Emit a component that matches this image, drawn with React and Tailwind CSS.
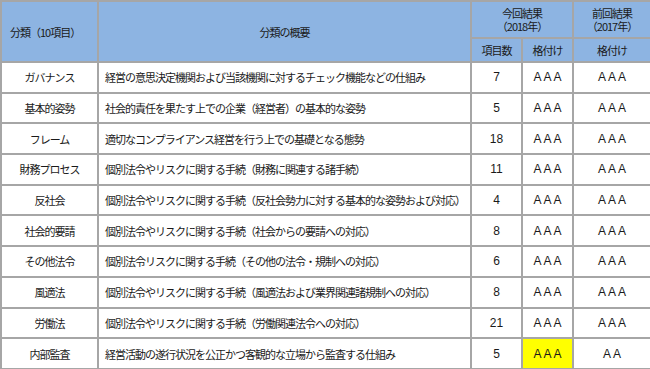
import React from "react";

const rows = [
  ["ガバナンス", "経営の意思決定機関および当該機関に対するチェック機能などの仕組み", "7", "A A A", "A A A"],
  ["基本的姿勢", "社会的責任を果たす上での企業（経営者）の基本的な姿勢", "5", "A A A", "A A A"],
  ["フレーム", "適切なコンプライアンス経営を行う上での基礎となる態勢", "18", "A A A", "A A A"],
  ["財務プロセス", "個別法令やリスクに関する手続（財務に関連する諸手続）", "11", "A A A", "A A A"],
  ["反社会", "個別法令やリスクに関する手続（反社会勢力に対する基本的な姿勢および対応）", "4", "A A A", "A A A"],
  ["社会的要請", "個別法令やリスクに関する手続（社会からの要請への対応）", "8", "A A A", "A A A"],
  ["その他法令", "個別法令リスクに関する手続（その他の法令・規制への対応）", "6", "A A A", "A A A"],
  ["風適法", "個別法令やリスクに関する手続（風適法および業界関連諸規制への対応）", "8", "A A A", "A A A"],
  ["労働法", "個別法令やリスクに関する手続（労働関連法令への対応）", "21", "A A A", "A A A"],
  ["内部監査", "経営活動の遂行状況を公正かつ客観的な立場から監査する仕組み", "5", "A A A", "A A", true],
];

const cell = "border-2 border-[#a6a6a6] p-0";

export default function App() {
  return (
    <div className="w-[650px] h-[369px] bg-white overflow-hidden text-[#1a1a1a] font-['Noto_Sans_CJK_JP',sans-serif] text-[11px] leading-[14px] tracking-[-1px]">
      <table className="w-[650px] table-fixed border-collapse border border-[#a6a6a6]">
        <colgroup>
          <col className="w-[97px]" />
          <col className="w-[373px]" />
          <col className="w-[51px]" />
          <col className="w-[51px]" />
          <col className="w-[78px]" />
        </colgroup>
        <thead className="bg-[#8db4e2] font-normal">
          <tr className="h-[37px]">
            <th rowSpan={2} className={`${cell} font-normal text-left pl-[8px]`}>分類（10項目）</th>
            <th rowSpan={2} className={`${cell} font-normal text-center`}>分類の概要</th>
            <th colSpan={2} className={`${cell} font-normal text-center leading-[13px]`}>
              今回結果
              <br />
              （2018年）
            </th>
            <th className={`${cell} font-normal text-center leading-[13px]`}>
              前回結果
              <br />
              （2017年）
            </th>
          </tr>
          <tr className="h-[24px]">
            <th className={`${cell} font-normal text-center`}>項目数</th>
            <th className={`${cell} font-normal text-center`}>格付け</th>
            <th className={`${cell} font-normal text-center`}>格付け</th>
          </tr>
        </thead>
        <tbody>
          {rows.map((r) => (
            <tr key={r[0]} className="h-[30.7px]">
              <td className={`${cell} text-center`}>{r[0]}</td>
              <td className={`${cell} pl-[6px] whitespace-nowrap`}>{r[1]}</td>
              <td className={`${cell} text-center font-['Liberation_Sans',sans-serif] text-[12px] tracking-normal`}>{r[2]}</td>
              <td className={`${cell} text-center font-['Liberation_Sans',sans-serif] text-[12px] tracking-normal ${r[5] ? "bg-[#ffff00]" : ""}`}>
                {r[3]}
              </td>
              <td className={`${cell} text-center font-['Liberation_Sans',sans-serif] text-[12px] tracking-normal`}>{r[4]}</td>
            </tr>
          ))}
        </tbody>
      </table>
    </div>
  );
}
